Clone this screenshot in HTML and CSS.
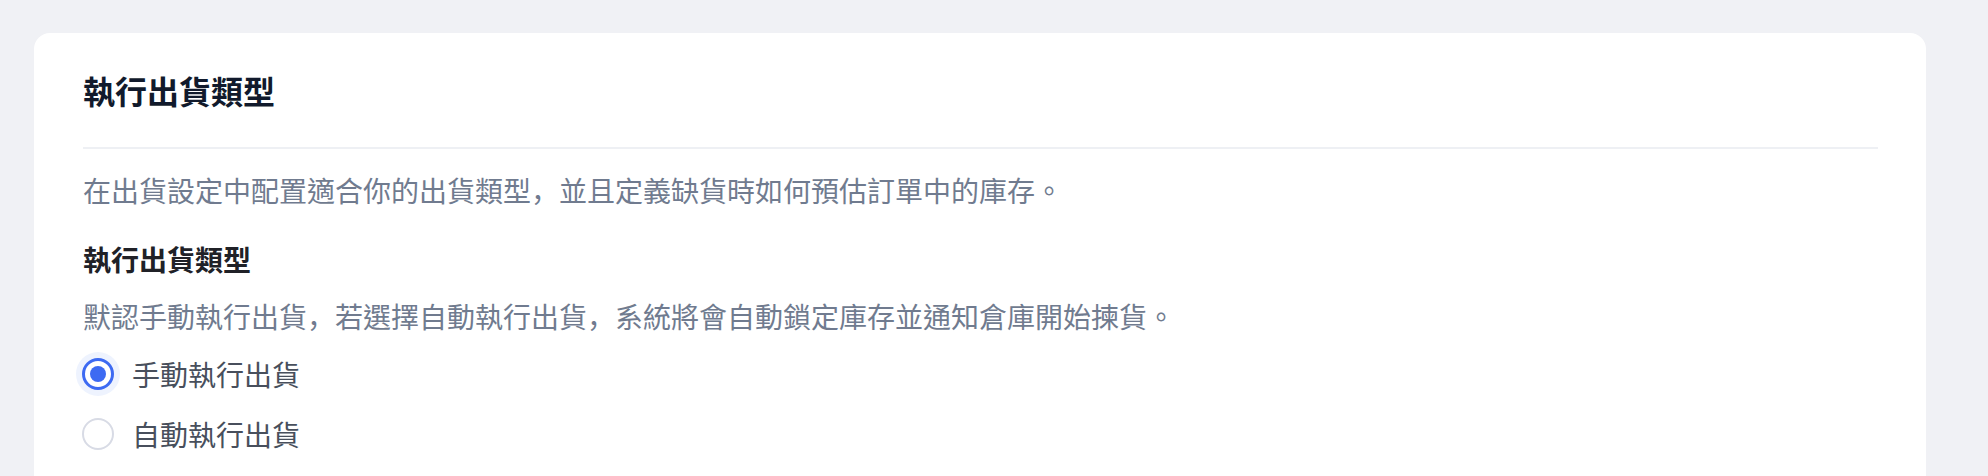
FILE: index.html
```html
<!DOCTYPE html>
<html>
<head>
    <title>執行出貨類型</title>
    <link rel="stylesheet" href="styles.css">
</head>
<body>

<div class="card">
    <div class="card-header">
        <h1>執行出貨類型</h1>
    </div>

    <p class="intro">在出貨設定中配置適合你的出貨類型<span class="comma">，</span>並且定義缺貨時如何預估訂單中的庫存。</p>

    <h2>執行出貨類型</h2>
    <p class="hint">默認手動執行出貨<span class="comma">，</span>若選擇自動執行出貨<span class="comma">，</span>系統將會自動鎖定庫存並通知倉庫開始揀貨。</p>

    <div class="radio-group">
        <label class="radio">
            <input type="radio" name="ship_type" value="manual" checked>
            <span class="dot"></span>
            <span class="radio-text">手動執行出貨</span>
        </label>
        <label class="radio">
            <input type="radio" name="ship_type" value="auto">
            <span class="dot"></span>
            <span class="radio-text">自動執行出貨</span>
        </label>
    </div>
</div>

</body>
</html>
```

FILE: styles.css
```css
body {
    font-family: "Noto Sans CJK TC", "Noto Sans", sans-serif;
    background-color: #f0f1f5;
    margin: 0;
    padding: 33px 62px 0 34px;
}

.card {
    background-color: white;
    border-radius: 16px 16px 0 0;
    padding: 0 48px 40px 49px;
}

.card-header {
    padding: 33px 0 33px;
    border-bottom: 2px solid #eef0f4;
}

h1 {
    font-size: 32px;
    line-height: 48px;
    font-weight: bold;
    color: #111a2c;
    margin: 0;
}

.intro, .hint {
    font-size: 28px;
    line-height: 40px;
    color: #707b8f;
    margin: 0;
}

/* full-width comma sitting low-left, as in the design */
.comma {
    font-family: "Noto Sans CJK JP", sans-serif;
}

.intro {
    margin-top: 21px;
}

h2 {
    font-size: 28px;
    line-height: 40px;
    font-weight: bold;
    color: #202127;
    margin: 29px 0 0;
}

.hint {
    margin-top: 17px;
}

.radio-group {
    display: flex;
    flex-direction: column;
    gap: 16px;
    margin-top: 16px;
    margin-left: -7px;
}

.radio {
    display: flex;
    align-items: center;
    height: 44px;
    cursor: pointer;
}

.radio input {
    display: none;
}

.dot {
    box-sizing: border-box;
    width: 32px;
    height: 32px;
    margin: 6px;
    border-radius: 50%;
    border: 2px solid #d8dbe5;
    background-color: white;
    display: flex;
    align-items: center;
    justify-content: center;
}

.radio input:checked + .dot {
    border: 3px solid #3d6af2;
    box-shadow: 0 0 0 6px #eef3fe;
}

.radio input:checked + .dot::after {
    content: "";
    width: 16px;
    height: 16px;
    border-radius: 50%;
    background-color: #3d6af2;
}

.radio-text {
    font-size: 28px;
    line-height: 40px;
    color: #484f5c;
    margin-left: 12px;
}
```
